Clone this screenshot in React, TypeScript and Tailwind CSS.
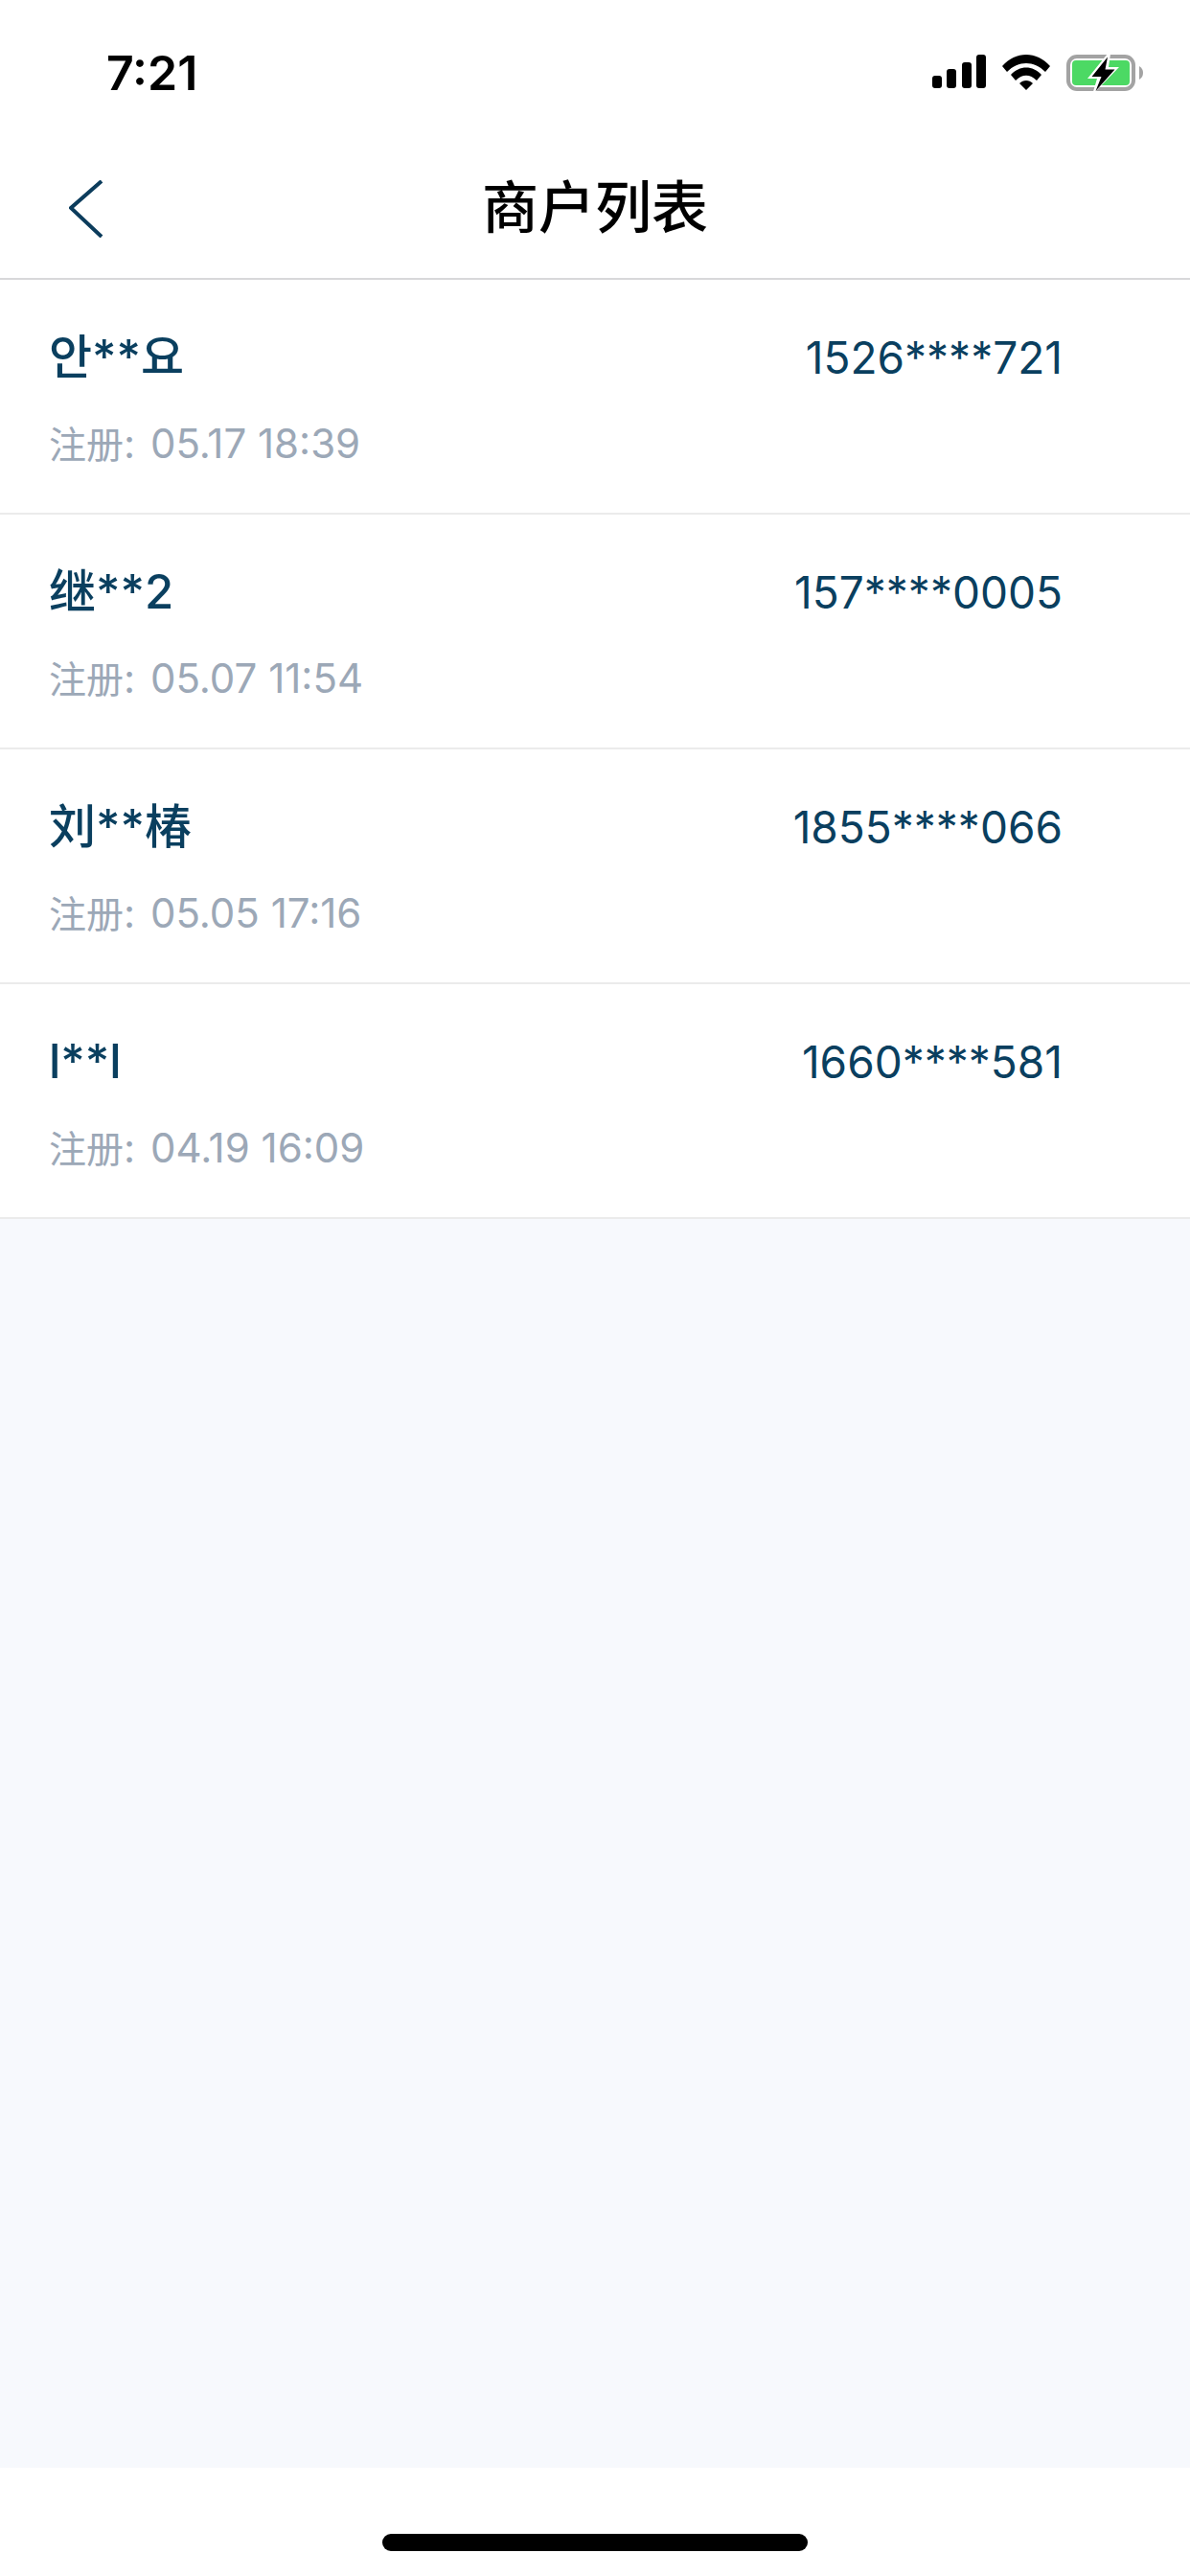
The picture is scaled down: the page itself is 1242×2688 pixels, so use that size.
const merchants = [
  { name: "안**요", phone: "1526****721", registered: "05.17 18:39" },
  { name: "继**2", phone: "157****0005", registered: "05.07 11:54" },
  { name: "刘**椿", phone: "1855****066", registered: "05.05 17:16" },
  { name: "l**l", phone: "1660****581", registered: "04.19 16:09" },
];

const FONT = "font-['Inter','Noto_Sans_CJK_SC','Noto_Sans_CJK_KR',sans-serif]";

function SignalIcon() {
  return (
    <svg width="56" height="35" viewBox="0 0 56 35" className="block">
      <rect x="0" y="22" width="10" height="13" rx="3" fill="#000" />
      <rect x="15" y="15" width="10" height="20" rx="3" fill="#000" />
      <rect x="31" y="8" width="10" height="27" rx="3" fill="#000" />
      <rect x="46" y="0" width="10" height="35" rx="3" fill="#000" />
    </svg>
  );
}

function WifiIcon() {
  return (
    <svg width="50" height="37" viewBox="0 0 50 37" className="block">
      <path d="M0 12 C14 -4 36 -4 50 12 L45 18 C33 6 17 6 5 18 Z" fill="#000" />
      <path d="M9 21 C18 11 32 11 41 21 L36 27 C29 20 21 20 14 27 Z" fill="#000" />
      <path d="M18 30 C22 26 28 26 32 30 L25 37 Z" fill="#000" />
    </svg>
  );
}

function BatteryIcon() {
  return (
    <svg width="80" height="40" viewBox="0 0 80 40" className="block">
      <rect x="2" y="2" width="68" height="34" rx="9" fill="none" stroke="#a3a3a3" strokeWidth="4" />
      <rect x="6" y="6" width="60" height="26" rx="4" fill="#4cd964" />
      <path d="M76 12 C79 14 80 16 80 19 C80 22 79 24 76 26 Z" fill="#a3a3a3" />
      <path d="M43 -1 L22 25 L32 25 L27 42 L55 13 L44 13 L46 -1 Z" fill="#fff" />
      <path d="M43 2.5 L26.5 23 L36.5 23 L30.5 38 L50.5 15.5 L40.5 15.5 Z" fill="#000" />
    </svg>
  );
}

function StatusBar() {
  return (
    <div className="flex h-[132px] items-start justify-between pl-[111px] pr-[49px] pt-[46px]">
      <span className="text-[50px] font-semibold leading-[60px] text-black">7:21</span>
      <div className="flex items-start pt-[11px]">
        <SignalIcon />
        <div className="ml-[17px]">
          <WifiIcon />
        </div>
        <div className="ml-[17px]">
          <BatteryIcon />
        </div>
      </div>
    </div>
  );
}

function NavBar() {
  return (
    <div className="relative flex h-[160px] items-start justify-center border-b-2 border-[#d8d8da] pt-[55px]">
      <svg width="36" height="60" viewBox="0 0 36 60" fill="none" className="absolute left-[72px] top-[56px]">
        <path d="M34 1 L2 29 L34 59" stroke="#0c3c5c" strokeWidth="4" />
      </svg>
      <h1 className="text-[59px] font-medium leading-none text-black">商户列表</h1>
    </div>
  );
}

export default function App() {
  return (
    <div className={`flex h-[2688px] w-[1242px] flex-col bg-white ${FONT}`}>
      <StatusBar />
      <NavBar />
      <div className="flex-1 bg-[#f7f9fd]">
        {merchants.map((m) => (
          <div key={m.phone} className="h-[245px] border-b-2 border-[#ebebeb] bg-white pl-[51px] pr-[133px] pt-[51px]">
            <div className="flex items-center justify-between">
              <span className="text-[49px] font-medium leading-[60px] text-[#0a3f5f]">{m.name}</span>
              <span className="text-[46px] leading-[60px] text-[#0a3f5f]">{m.phone}</span>
            </div>
            <div className="mt-[37px] text-[42px] leading-[46px] text-[#9ca8b7]">
              <span className="text-[39px]">注册</span>
              <span className="mr-[4px]">: </span>
              {m.registered}
            </div>
          </div>
        ))}
      </div>
      <div className="flex h-[113px] justify-center bg-white pt-[69px]">
        <div className="h-[18px] w-[444px] rounded-full bg-black" />
      </div>
    </div>
  );
}
